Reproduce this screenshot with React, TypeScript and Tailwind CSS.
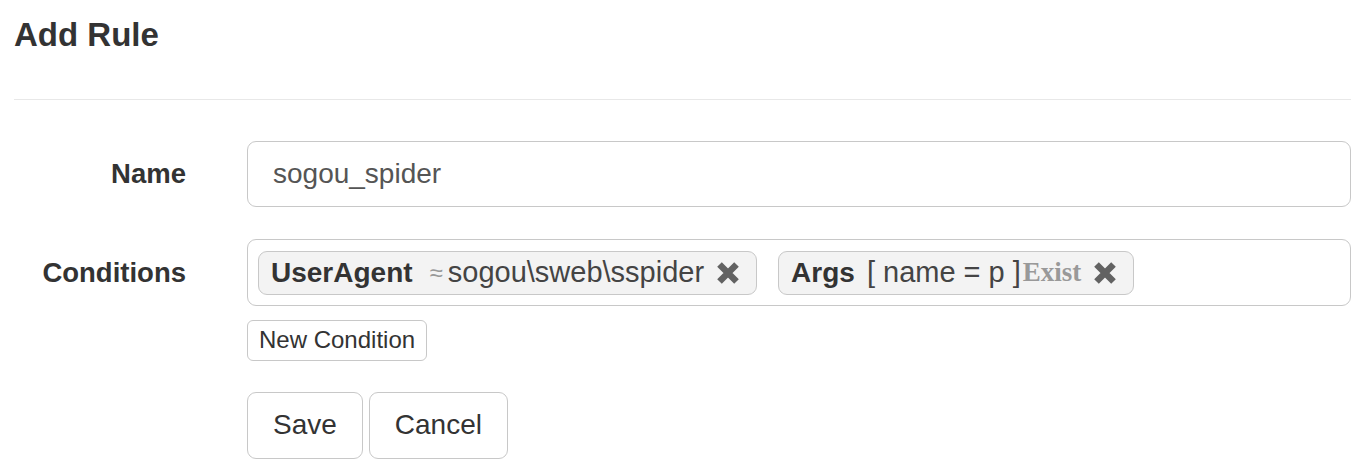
const SANS = "font-['Liberation_Sans',Arial,sans-serif]";

function RemoveIcon() {
  return (
    <svg width="24" height="24" viewBox="0 0 24 24" className="shrink-0">
      <path d="M3.5 3.5 L20.5 20.5 M20.5 3.5 L3.5 20.5" stroke="#626262" strokeWidth="6.5" strokeLinecap="butt" />
    </svg>
  );
}

function ConditionChip({ field, children }: { field: string; children: React.ReactNode }) {
  return (
    <div className="flex h-[44px] items-center rounded-[9px] border border-[#c8c8c8] bg-[#f3f3f3] pl-[12px] pr-[16px]">
      <span className="font-bold text-[#333]">{field}</span>
      {children}
      <span className="ml-[12px]">
        <RemoveIcon />
      </span>
    </div>
  );
}

export default function App() {
  return (
    <div className={`${SANS} h-[476px] w-[1370px] overflow-hidden bg-white text-[28px] text-[#333]`}>
      <div className="pl-[14px] pr-[19px]">
        <h3 className="pt-[17px] text-[33px] font-bold leading-[36px] text-[#333]">Add Rule</h3>
        <div className="mt-[46px] h-px bg-[#e8e8e8]" />

        <div className="mt-[41px] flex items-center">
          <label className="w-[172px] text-right text-[27.5px] font-bold">Name</label>
          <div className="ml-[61px] flex h-[66px] flex-1 items-center rounded-[9px] border border-[#c8c8c8] bg-white px-[25px] text-[#555]">
            sogou_spider
          </div>
        </div>

        <div className="mt-[32px] flex items-center">
          <label className="w-[172px] text-right text-[27.5px] font-bold">Conditions</label>
          <div className="ml-[61px] flex h-[67px] flex-1 items-center gap-[21px] rounded-[9px] border border-[#c8c8c8] bg-white px-[10px]">
            <ConditionChip field="UserAgent">
              <span className="ml-[17px] mr-[5px] text-[24px] text-[#999]">≈</span>
              <span className="text-[29px] text-[#444]">sogou\sweb\sspider</span>
            </ConditionChip>
            <ConditionChip field="Args">
              <span className="ml-[12px] text-[29px] text-[#444]">[ name = p ]</span>
              <span className="ml-[2px] font-['Liberation_Serif','Times_New_Roman',serif] text-[27px] font-bold text-[#999]">Exist</span>
            </ConditionChip>
          </div>
        </div>

        <div className="ml-[233px] mt-[12px]">
          <button className="h-[41px] rounded-[6px] border border-[#c8c8c8] bg-white px-[11px] text-[24px] text-[#333]">
            New Condition
          </button>
        </div>

        <div className="ml-[233px] mt-[31px] flex gap-[6px]">
          <button className="h-[67px] rounded-[9px] border border-[#c8c8c8] bg-white px-[25px] text-[#333]">Save</button>
          <button className="h-[67px] rounded-[9px] border border-[#c8c8c8] bg-white px-[25px] text-[#333]">Cancel</button>
        </div>
      </div>
    </div>
  );
}
